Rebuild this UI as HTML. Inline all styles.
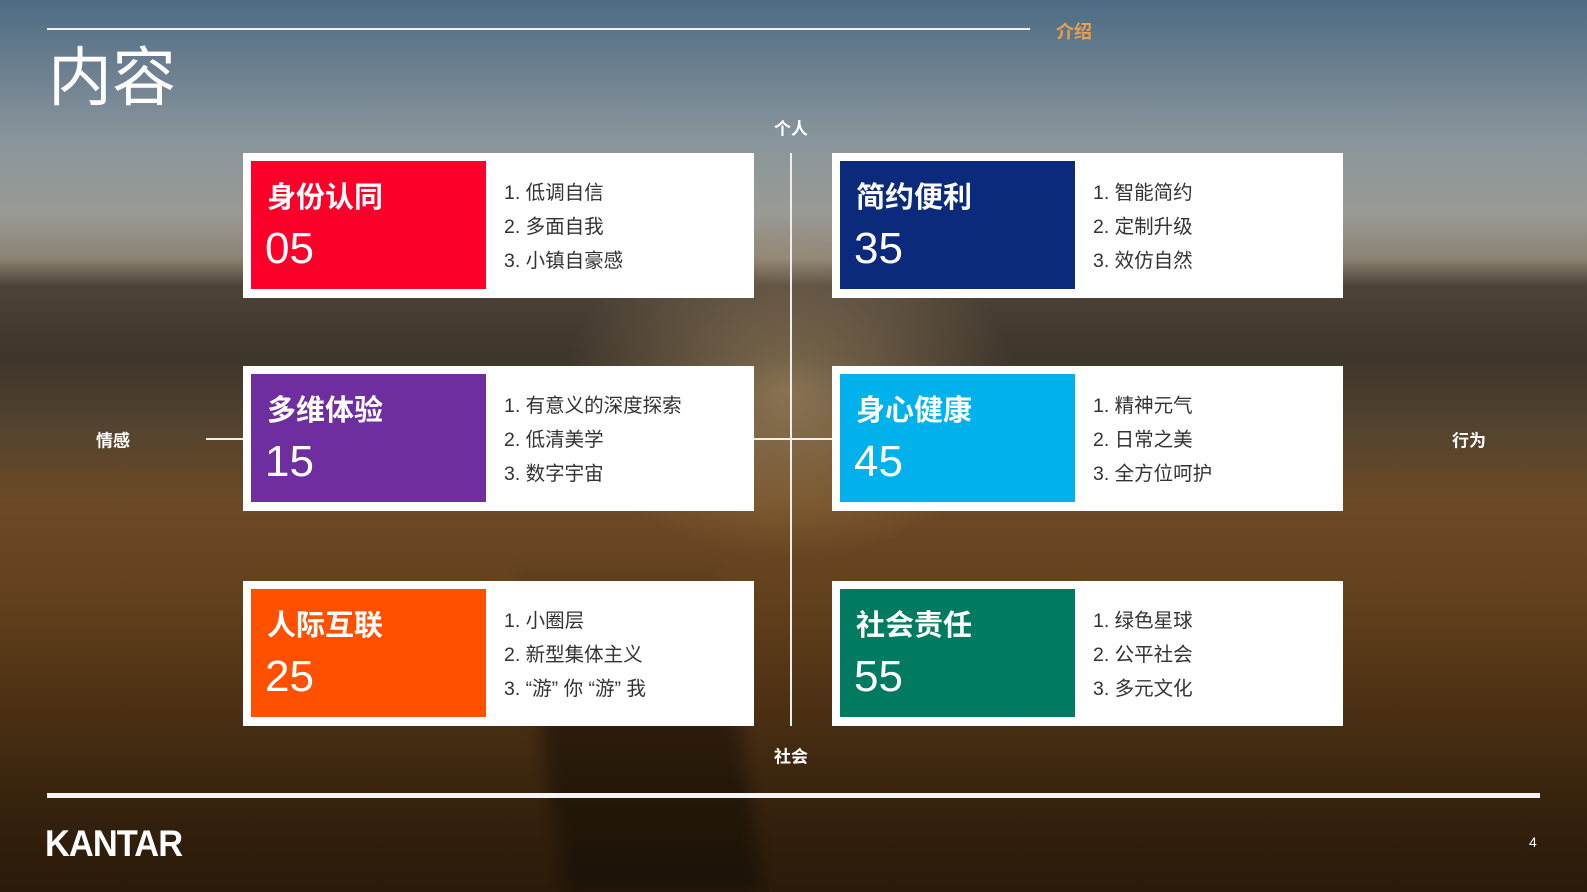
<!DOCTYPE html>
<html><head><meta charset="utf-8"><style>
*{margin:0;padding:0;box-sizing:border-box}
body{width:1587px;height:892px;overflow:hidden;position:relative;font-family:"Liberation Sans","Noto Sans CJK SC",sans-serif;
background:linear-gradient(180deg,#4c6c84 0%,#6d8090 8%,#8a969c 16%,#9a9a94 24%,#8b8273 29%,#4d4338 32%,#3e352b 40%,#54432e 48%,#6b4a25 56%,#64421d 66%,#4e3214 78%,#36220d 90%,#2a1a0a 100%);}
.glow{position:absolute;left:560px;top:220px;width:460px;height:340px;background:radial-gradient(ellipse at center,rgba(255,215,150,.35),rgba(255,200,120,0) 70%)}
.shadow{position:absolute;left:540px;top:560px;width:200px;height:332px;background:linear-gradient(180deg,rgba(15,10,5,0),rgba(15,10,5,.45) 30%,rgba(15,10,5,.5));filter:blur(8px);transform:skewX(8deg)}
.abs{position:absolute}
.card{position:absolute;background:#fff;width:511px;height:145px}
.blk{position:absolute;left:8px;top:8px;width:235px;height:128px;color:#fff}
.blk .t{position:absolute;left:16px;top:21px;font-size:29px;font-weight:bold;line-height:32px}
.blk .n{position:absolute;left:14px;top:63px;font-size:44px;line-height:50px}
.list{position:absolute;left:261px;top:23px;font-size:19.5px;color:#333;line-height:34px}
.lbl{position:absolute;color:#fff;font-size:17px;font-weight:bold;transform:translate(-50%,-50%)}
</style></head><body>
<div class="glow"></div><div class="shadow"></div>
<div class="abs" style="left:47px;top:28px;width:983px;height:2px;background:#eee"></div>
<div class="abs" style="left:1056px;top:18px;color:#e8a050;font-size:18px;font-weight:bold">介绍</div>
<div class="abs" style="left:48px;top:40px;color:#fff;font-size:64px;line-height:76px">内容</div>
<div class="abs" style="left:790px;top:153px;width:1.5px;height:573px;background:#eee"></div>
<div class="abs" style="left:206px;top:438px;width:1137px;height:1.5px;background:#eee"></div>
<div class="lbl" style="left:791px;top:127px">个人</div>
<div class="lbl" style="left:791px;top:755px">社会</div>
<div class="lbl" style="left:113px;top:439px">情感</div>
<div class="lbl" style="left:1469px;top:439px">行为</div>

<div class="card" style="left:243px;top:153px"><div class="blk" style="background:#fd0029"><div class="t">身份认同</div><div class="n">05</div></div><div class="list">1. 低调自信<br>2. 多面自我<br>3. 小镇自豪感</div></div>
<div class="card" style="left:832px;top:153px"><div class="blk" style="background:#0b2a7b"><div class="t">简约便利</div><div class="n">35</div></div><div class="list">1. 智能简约<br>2. 定制升级<br>3. 效仿自然</div></div>
<div class="card" style="left:243px;top:366px"><div class="blk" style="background:#6e2ea0"><div class="t">多维体验</div><div class="n">15</div></div><div class="list">1. 有意义的深度探索<br>2. 低清美学<br>3. 数字宇宙</div></div>
<div class="card" style="left:832px;top:366px"><div class="blk" style="background:#00b1ec"><div class="t">身心健康</div><div class="n">45</div></div><div class="list">1. 精神元气<br>2. 日常之美<br>3. 全方位呵护</div></div>
<div class="card" style="left:243px;top:581px"><div class="blk" style="background:#ff5000"><div class="t">人际互联</div><div class="n">25</div></div><div class="list">1. 小圈层<br>2. 新型集体主义<br>3. “游” 你 “游” 我</div></div>
<div class="card" style="left:832px;top:581px"><div class="blk" style="background:#007a60"><div class="t">社会责任</div><div class="n">55</div></div><div class="list">1. 绿色星球<br>2. 公平社会<br>3. 多元文化</div></div>

<div class="abs" style="left:47px;top:793px;width:1493px;height:5px;background:#f4f4f4"></div>
<div class="abs" style="left:45px;top:824px;color:#fff;font-size:37px;font-weight:bold;line-height:40px;letter-spacing:-1px;transform:scaleX(.93);transform-origin:left">KANTAR</div>
<div class="abs" style="left:1529px;top:834px;color:#fff;font-size:14px">4</div>
</body></html>
